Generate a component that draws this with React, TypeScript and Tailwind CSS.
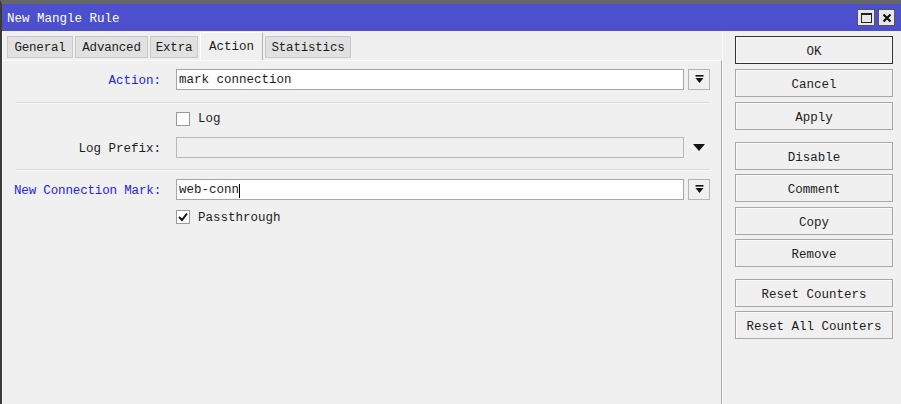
import React from "react";

const tabs = [
  { label: "General", w: "w-[66px]" },
  { label: "Advanced", w: "w-[73px]" },
  { label: "Extra", w: "w-[48px]" },
  { label: "Action", w: "w-[63px]" },
  { label: "Statistics", w: "w-[86px]" },
];

const buttons = [
  { label: "OK", mt: "mt-[5px]", main: true },
  { label: "Cancel", mt: "mt-[5px]" },
  { label: "Apply", mt: "mt-[5px]" },
  { label: "Disable", mt: "mt-[12px]" },
  { label: "Comment", mt: "mt-[4px]" },
  { label: "Copy", mt: "mt-[5px]" },
  { label: "Remove", mt: "mt-[4px]" },
  { label: "Reset Counters", mt: "mt-[12px]" },
  { label: "Reset All Counters", mt: "mt-[4px]" },
];

const DropBtn = () => (
  <div className="w-[22px] h-[21px] border border-[#b4b4b4] bg-[#f0f0f0] flex items-center justify-center">
    <svg width="9" height="9" viewBox="0 0 9 9">
      <rect x="0.5" y="0" width="8" height="1.6" fill="#111" />
      <path d="M0.5 3 H8.5 L4.5 8 Z" fill="#111" />
    </svg>
  </div>
);

const Separator = () => (
  <div className="ml-[13px] mr-[11px] border-t border-[#dadada] border-b border-b-[#f8f8f8]" />
);

const Checkbox = ({ checked }: { checked?: boolean }) => (
  <div className="w-[14px] h-[14px] bg-white border border-[#9a9a9a] flex items-center justify-center">
    {checked && (
      <svg width="10" height="10" viewBox="0 0 10 10">
        <path d="M1 5 L4 8 L9 1.5" stroke="#111" strokeWidth="2" fill="none" />
      </svg>
    )}
  </div>
);

export default function App() {
  return (
    <div className="w-[901px] h-[404px] overflow-hidden flex flex-col bg-[#f0f0f0] border-t-[4px] border-t-[#666] border-l-[2px] border-l-[#3a3a3a] font-['Liberation_Mono',monospace] text-[12.5px] text-[#1c1c1c]">
      {/* title bar */}
      <div className="h-[27px] bg-[#4c50ce] flex items-center pl-[5px] pr-[6px]">
        <span className="text-white translate-y-[2px]">New Mangle Rule</span>
        <div className="ml-auto flex gap-[3px]">
          <div className="w-[18px] h-[17px] bg-[#e8e8e8] border border-[#555] flex items-center justify-center">
            <div className="w-[11px] h-[10px] border border-[#222] border-t-[2px]" />
          </div>
          <div className="w-[17px] h-[17px] bg-[#e8e8e8] border border-[#555] flex items-center justify-center">
            <svg width="10" height="10" viewBox="0 0 10 10">
              <path d="M1.5 1.5 L8.5 8.5 M8.5 1.5 L1.5 8.5" stroke="#111" strokeWidth="2.2" />
            </svg>
          </div>
        </div>
      </div>

      <div className="flex-1 flex border-l border-l-[#fafafa]">
        {/* left side */}
        <div className="w-[719px] flex flex-col">
          <div className="h-[29px] flex items-start pl-[4px] pt-[1px] gap-[2px]">
            {tabs.map((t) =>
              t.label === "Action" ? (
                <div
                  key={t.label}
                  className={`${t.w} h-[28px] flex items-center justify-center bg-[#f0f0f0] border-t border-l border-white border-r border-r-[#b0b0b0] -mb-[1px] relative z-10`}
                >
                  <span className="translate-y-[1px]">{t.label}</span>
                </div>
              ) : (
                <div
                  key={t.label}
                  className={`${t.w} mt-[4px] h-[22px] flex items-center justify-center bg-[#e1e1e1] border border-[#c9c9c9]`}
                >
                  <span className="translate-y-[1px] tracking-[-0.2px]">{t.label}</span>
                </div>
              )
            )}
          </div>

          <div className="flex-1 border-t border-t-[#fbfbfb] border-r border-r-[#a9a9a9] flex flex-col">
            {/* Action */}
            <div className="mt-[8px] flex items-center h-[21px] pr-[11px]">
              <div className="w-[158px] text-right text-[#2424e4] translate-y-[2px]">Action:</div>
              <div className="ml-[15px] flex-1 h-[21px] bg-white border border-[#a6a6a6] flex items-center px-[2px]">
                <span className="translate-y-[1px]">mark connection</span>
              </div>
              <div className="ml-[4px]">
                <DropBtn />
              </div>
            </div>

            <div className="mt-[12px]">
              <Separator />
            </div>

            {/* Log */}
            <div className="mt-[7px] flex items-center h-[15px] pl-[173px]">
              <Checkbox />
              <span className="ml-[8px] translate-y-[1px]">Log</span>
            </div>

            {/* Log Prefix */}
            <div className="mt-[11px] flex items-center h-[21px] pr-[11px]">
              <div className="w-[158px] text-right translate-y-[2px]">Log Prefix:</div>
              <div className="ml-[15px] flex-1 h-[21px] bg-[#f0f0f0] border border-[#b8b8b8]" />
              <div className="ml-[4px] w-[22px] h-[21px] flex items-center justify-center">
                <svg width="12" height="7" viewBox="0 0 12 7">
                  <path d="M0 0 H12 L6 7 Z" fill="#111" />
                </svg>
              </div>
            </div>

            <div className="mt-[11px]">
              <Separator />
            </div>

            {/* New Connection Mark */}
            <div className="mt-[8px] flex items-center h-[21px] pr-[11px]">
              <div className="w-[158px] text-right text-[#2424e4] translate-y-[2px] tracking-[-0.15px]">New Connection Mark:</div>
              <div className="ml-[15px] flex-1 h-[21px] bg-white border border-[#a6a6a6] flex items-center px-[2px]">
                <span className="translate-y-[1px]">web-conn</span>
                <span className="w-[1px] h-[14px] bg-black translate-y-[1px]" />
              </div>
              <div className="ml-[4px]">
                <DropBtn />
              </div>
            </div>

            {/* Passthrough */}
            <div className="mt-[9px] flex items-center h-[15px] pl-[173px]">
              <Checkbox checked />
              <span className="ml-[8px] translate-y-[2px]">Passthrough</span>
            </div>
          </div>
        </div>

        {/* right buttons */}
        <div className="flex-1 border-l border-l-[#fafafa] flex flex-col pl-[12px] pr-[8px]">
          {buttons.map((b) => (
            <div
              key={b.label}
              className={`${b.mt} h-[28px] flex items-center justify-center bg-[#f0f0f0] ${
                b.main
                  ? "border border-[#333] shadow-[inset_0_0_0_1px_#fafafa]"
                  : "border border-[#a8a8a8] shadow-[inset_1px_1px_0_#fafafa]"
              }`}
            >
              <span className="translate-y-[2px]">{b.label}</span>
            </div>
          ))}
        </div>
      </div>
    </div>
  );
}
